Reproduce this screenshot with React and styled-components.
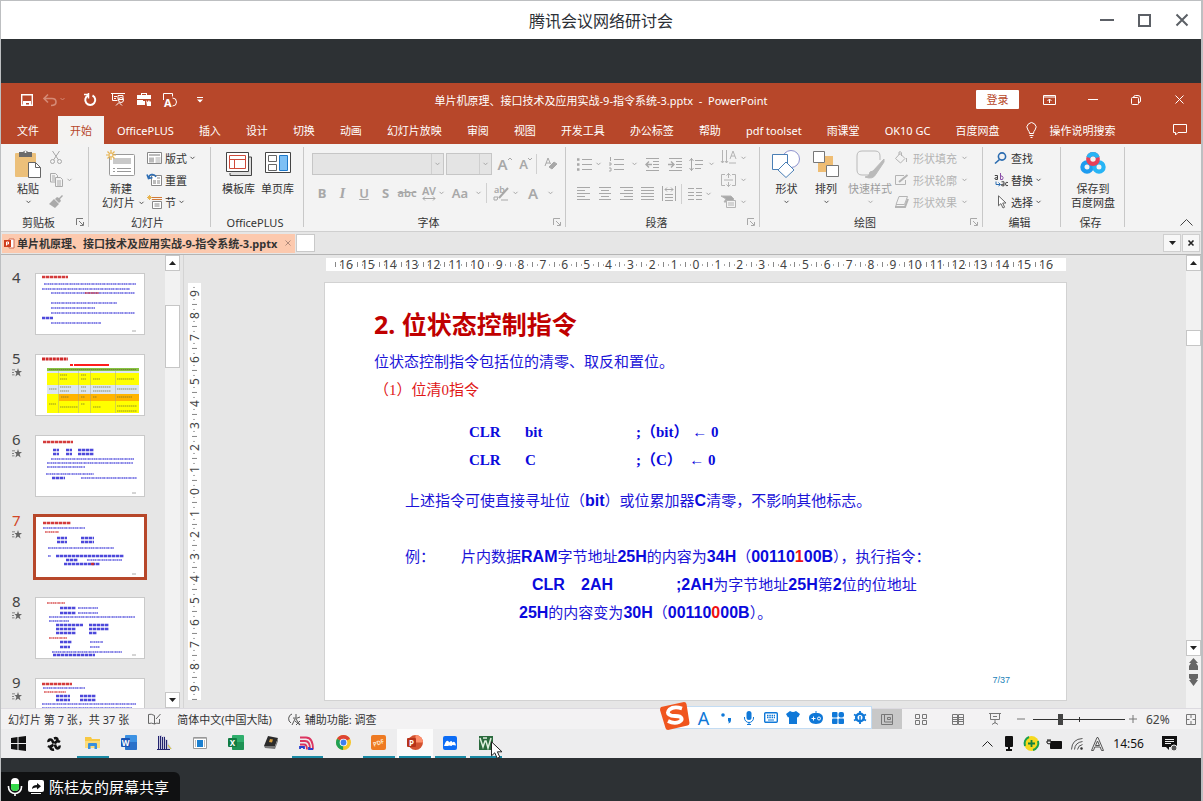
// App.jsx
import React from 'react';
import styled, { createGlobalStyle, css } from 'styled-components';

const ui = '"Noto Sans", "Noto Sans CJK SC", sans-serif';
const red = '#b7472a';
const gray = '#a8a8a8';

const GlobalStyle = createGlobalStyle`
  * {
    box-sizing: border-box;
  }

  body {
    margin: 0;
    background: #2d3134;
    font-family: ${ui};
    font-size: 11px;
    color: #333;
  }

  button, select, input {
    font: inherit;
    color: inherit;
    margin: 0;
    padding: 0;
    border: 0;
    background: none;
  }
`;

const Shell = styled.div`
  display: flex;
  flex-direction: column;
  height: 100vh;
  border: 1px solid #bdbfc1;
  border-right-width: 2px;
  border-bottom: 0;
  background: #2d3134;
`;

const Row = styled.div`
  display: flex;
  align-items: center;
`;

const Glyph = styled.svg`
  display: block;
  flex: none;
  overflow: visible;
`;

const Icon = ({ w = 16, h = w, children, ...rest }) => (
  <Glyph width={w} height={h} viewBox={`0 0 ${w} ${h}`} fill="none" stroke="currentColor" aria-hidden="true" {...rest}>
    {children}
  </Glyph>
);

const Chevron = ({ color = '#555' }) => (
  <Icon w={5} h={4} stroke={color}><path d="M.5 .8l2 2 2-2" /></Icon>
);

/* ---------- meeting window ---------- */

const MeetingBar = styled.header`
  display: grid;
  grid-template-columns: 1fr auto 1fr;
  align-items: center;
  flex: none;
  height: 38px;
  background: #fff;

  h1 {
    grid-column: 2;
    margin: 0;
    padding-top: 2px;
    font-size: 16px;
    font-weight: 400;
    line-height: 24px;
    color: #2b2f36;
  }
`;

const MeetingControls = styled(Row)`
  justify-content: flex-end;
  gap: 24px;
  padding-right: 13px;
  color: #5c6066;
`;

const Gap = styled.div`
  flex: none;
  height: 44px;
`;

const ShareStrip = styled.footer`
  display: flex;
  align-items: flex-end;
  flex: none;
  height: 43px;
`;

const ShareLabel = styled(Row)`
  height: 29px;
  padding: 0 11px 0 6px;
  gap: 5px;
  border-top-right-radius: 6px;
  background: #101112;
  color: #fff;
  font-size: 15px;
  line-height: 28px;
`;

/* ---------- title bar and tabs ---------- */

const TitleBar = styled.div`
  display: grid;
  grid-template-columns: 1fr auto 1fr;
  align-items: center;
  flex: none;
  height: 33px;
  background: ${red};
  color: #fff;
  white-space: pre;
`;

const QuickAccess = styled(Row)`
  padding-left: 19px;
`;

const WindowControls = styled(Row)`
  justify-content: flex-end;
`;

const Slot = styled.button`
  display: flex;
  align-items: center;
  justify-content: center;
  flex: none;
  width: ${p => p.$w || 16}px;
  height: ${p => p.$h || 20}px;
`;

const SignIn = styled.button`
  width: 43px;
  height: 19px;
  margin-right: 8px;
  border-radius: 1px;
  background: #fff;
  color: ${red};
  line-height: 19px;
`;

const Tabs = styled.nav`
  display: flex;
  align-items: stretch;
  gap: 1px;
  flex: none;
  height: 28px;
  background: ${red};
  color: #fff;
`;

const Tab = styled.button`
  flex: none;
  padding: ${p => (p.$file ? '0 18px 0 16px' : '0 12px')};
  white-space: nowrap;

  ${p => p.$active && css`
    background: #f4f3f2;
    color: ${red};
  `}
`;

const TellMe = styled.button`
  display: flex;
  align-items: center;
  gap: 12px;
  padding-left: 14px;
  margin-right: auto;
`;

/* ---------- ribbon ---------- */

const Ribbon = styled.div`
  display: flex;
  flex: none;
  height: 88px;
  padding-top: 3px;
  background: #f3f3f3;
  border-bottom: 1px solid #cfcfcf;
`;

const GroupBox = styled.section`
  display: flex;
  flex-direction: column;
  flex: none;
  width: ${p => p.$w}px;
  height: 80px;
  border-right: 1px solid #c8c8c8;
`;

const GroupBody = styled.div`
  display: flex;
  flex: 1;
  gap: ${p => p.$gap || 0}px;
  padding-left: ${p => p.$pad || 0}px;
`;

const GroupName = styled.div`
  display: flex;
  align-items: center;
  height: 14px;
  margin-bottom: -2px;
  padding-right: 4px;

  span {
    flex: 1;
    text-align: center;
  }
`;

const BigButton = styled.button`
  display: flex;
  flex-direction: column;
  align-items: center;
  flex: none;
  width: ${p => p.$w}px;
  padding-top: 3px;
  line-height: 14px;
  white-space: nowrap;
  opacity: ${p => (p.disabled ? 0.45 : 1)};

  & > svg:first-child {
    margin-bottom: 4px;
  }
`;

const Caret = styled.span`
  display: inline-flex;
  padding: 4px;
`;

const NameWithCaret = styled(Row)`
  gap: 4px;
  padding-left: 4px;
`;

const Stack = styled.div`
  display: flex;
  flex-direction: column;
  flex: none;
  gap: 1px;
`;

const SmallButton = styled.button`
  display: flex;
  align-items: center;
  gap: ${p => p.$gap || 3}px;
  height: 21px;
  white-space: nowrap;
  color: ${p => (p.disabled ? '#b4b4b4' : '#333')};
`;

const ToolRow = styled(Row)`
  height: ${p => p.$h || 29}px;
  color: ${gray};
`;

const Rule = styled.i`
  width: 1px;
  height: 20px;
  background: #d0d0d0;
`;

const Combo = styled.label`
  display: flex;
  width: ${p => p.$w}px;
  height: 22px;
  margin-right: 2px;
  border: 1px solid #c6c6c6;
  background: #e4e4e4;

  select {
    flex: 1;
    min-width: 0;
    appearance: none;
  }

  span {
    display: flex;
    align-items: center;
    width: 12px;
    padding-left: 3px;
    border-left: 1px solid #cfcfcf;
  }
`;

const Letter = styled.span`
  font-size: ${p => p.$size || 13}px;
  font-weight: ${p => p.$weight || 600};
  line-height: 18px;
  text-decoration: ${p => p.$line || 'none'};
  font-style: ${p => (p.$italic ? 'italic' : 'normal')};
  font-family: ${p => (p.$italic ? '"Liberation Serif", serif' : 'inherit')};
`;

const Collapse = styled.button`
  align-self: flex-end;
  margin: 0 8px 5px auto;
`;

/* ---------- document tabs ---------- */

const DocTabs = styled(Row)`
  flex: none;
  height: 23px;
  padding-right: 1px;
  background: #e6e6e6;
  border-bottom: 1px solid #b5b5b5;
`;

const DocTab = styled.div`
  display: flex;
  align-items: center;
  gap: 2px;
  height: 19px;
  margin-left: 1px;
  padding: 0 4px 0 2px;
  background: #fcc9ae;
  font-weight: 700;
  white-space: nowrap;

  button {
    margin-left: 6px;
  }
`;

const NewTab = styled.button`
  width: 19px;
  height: 18px;
  margin: 0 auto 0 1px;
  border: 1px solid #c9c9c9;
  background: #fff;
`;

const DocButton = styled.button`
  display: flex;
  align-items: center;
  justify-content: center;
  width: 18px;
  height: 18px;
  margin-left: 1px;
  border: 1px solid #cfcfcf;
  background: #f7f7f7;
`;

/* ---------- workspace ---------- */

const Workspace = styled.main`
  display: flex;
  flex: 1;
  min-height: 0;
  background: #e6e6e6;
`;

const Outline = styled.ol`
  display: flex;
  flex-direction: column;
  gap: 20px;
  flex: none;
  width: 164px;
  margin: 0;
  padding: 18px 0 0 11px;
  list-style: none;
  overflow: hidden;
`;

const OutlineItem = styled.li`
  display: flex;
  gap: 13px;
  flex: none;
  height: 61px;

  div {
    width: 10px;
    font-size: 15px;
    line-height: 8px;
    color: ${p => (p.$active ? '#d24726' : '#444')};
  }

  div svg {
    margin-top: 6px;
  }
`;

const Thumb = styled.svg`
  flex: none;
  width: 110px;
  height: 62px;
  background: #fff;
  outline: 1px solid #c9c9c9;
  outline-offset: -1px;

  ${p => p.$active && css`
    outline: 3px solid ${red};
    outline-offset: -1px;
  `}
`;

const Scrollbar = styled.div`
  display: flex;
  flex-direction: column;
  flex: none;
  width: 15px;
  padding-bottom: ${p => p.$bottom || 0}px;
  background: #f2f2f2;
`;

const ScrollButton = styled.button`
  display: flex;
  align-items: center;
  justify-content: center;
  flex: none;
  width: 15px;
  height: 16px;
  border: 1px solid #c6c6c6;
  background: #fff;
`;

const ScrollThumb = styled.div`
  height: ${p => p.$h}px;
  margin: ${p => p.$top}px 0 auto;
  border: 1px solid #c6c6c6;
  background: #fff;
`;

const Canvas = styled.div`
  display: grid;
  grid-template-columns: 13px 1fr;
  grid-template-rows: 13px auto;
  gap: 12px 124px;
  align-content: start;
  flex: 1;
  min-width: 0;
  margin-left: 3px;
  padding: 3px 120px 0 4px;
  border-left: 1px solid #d4d4d4;
`;

const RulerH = styled.div`
  display: flex;
  grid-column: 2;
  padding: 0 9px;
  margin-left: 1px;
  background: #fff;
`;

const Mark = styled.span`
  flex: 1 1 0;
  min-width: 0;
  display: flex;
  justify-content: center;
  align-items: center;
  font-size: 12px;
  line-height: 13px;
  color: #444;
  background:
    linear-gradient(#888, #888) left center / 1px 5px no-repeat,
    linear-gradient(#aaa, #aaa) 5px center / 1px 2px no-repeat,
    linear-gradient(#aaa, #aaa) 17px center / 1px 2px no-repeat;
`;

const RulerV = styled.div`
  display: flex;
  flex-direction: column;
  background: #fff;

  ${Mark} {
    writing-mode: vertical-rl;
    transform: rotate(180deg);
    background:
      linear-gradient(#888, #888) center top / 5px 1px no-repeat,
      linear-gradient(#aaa, #aaa) center 5px / 2px 1px no-repeat,
      linear-gradient(#aaa, #aaa) center 17px / 2px 1px no-repeat;
  }
`;

const Slide = styled.article`
  display: flex;
  flex-direction: column;
  aspect-ratio: 741 / 417;
  padding: 26px 56px 14px 49px;
  background: #fff;
  box-shadow: 0 0 0 1px #d2d2d2;
  color: #1c14d8;
  font-family: "Liberation Sans", "Noto Sans CJK SC", sans-serif;
  font-size: 15px;
  line-height: 28px;
  white-space: nowrap;

  h2 {
    margin: 0 0 9px;
    color: #c00000;
    font-family: ${ui};
    font-size: 25px;
    line-height: 30px;
  }

  p {
    margin: 0;
  }

  b {
    font-size: 16px;
    color: #0a0adc;
  }

  em {
    font-style: normal;
    color: #f01010;
  }
`;

const Serif = styled.div`
  font-family: "Liberation Serif", "Noto Sans CJK SC", serif;

  & > p:last-child {
    color: #e01818;
  }
`;

const Code = styled.div`
  display: grid;
  grid-template-columns: 56px 111px auto;
  justify-content: start;
  margin: 14px 0 13px 95px;
  font-family: "Liberation Serif", "Noto Sans CJK SC", serif;
  font-size: 15px;
  font-weight: 700;
  color: #0a0adc;
  white-space: pre;
`;

const Indent = styled.div`
  padding-left: 31px;
`;

const Example = styled.div`
  display: grid;
  grid-template-columns: 56px auto;
  margin-top: 28px;
`;

const Step = styled.p`
  display: flex;
  grid-column: 2;
  padding-left: 71px;

  span:nth-child(1) {
    width: 49px;
  }

  span:nth-child(2) {
    width: 95px;
  }
`;

const Result = styled.p`
  grid-column: 2;
  padding-left: 58px;
`;

const PageNo = styled.div`
  margin-top: auto;
  align-self: flex-end;
  color: #1a7fb8;
  font-size: 9px;
  line-height: 12px;
`;

/* ---------- status bar ---------- */

const StatusBar = styled(Row)`
  position: relative;
  flex: none;
  height: 21px;
  padding: 0 5px 0 7px;
  border-top: 1px solid #dcdae0;
  background: #f3f2f3;
  white-space: pre;
`;

const StatusItem = styled(Row)`
  gap: 3px;
  margin-right: ${p => p.$mr || 0}px;
`;

const Views = styled(Row)`
  margin-left: auto;
  color: #777;
`;

const ViewButton = styled(Slot)`
  background: ${p => (p.$active ? '#c8c8c8' : 'none')};
`;

const Zoom = styled.input`
  appearance: none;
  width: 92px;
  height: 12px;
  margin: 0 4px;
  background:
    linear-gradient(#333, #333) 50% 50% / 1px 5px no-repeat,
    linear-gradient(#333, #333) 0 50% / 100% 1px no-repeat;

  &::-webkit-slider-thumb {
    appearance: none;
    width: 5px;
    height: 11px;
    background: #444;
  }
`;

const Percent = styled.output`
  width: 39px;
  margin-left: 9px;
  font-size: 12px;
  color: #444;
`;

// Input-method toolbar floating over the status bar.
const Ime = styled.div`
  position: absolute;
  right: 329px;
  bottom: 0;
  display: flex;
  align-items: center;
  height: 23px;
  padding-left: 21px;
  border: 1px solid #c3dcf3;
  background: #fff;
  color: #0f78d8;

  & > svg {
    position: absolute;
    left: -12px;
    top: -5px;
  }
`;

/* ---------- taskbar ---------- */

const Taskbar = styled(Row)`
  flex: none;
  height: 29px;
  background: #ededee;
  color: #111;
`;

const Apps = styled.div`
  display: flex;
  align-self: stretch;
  width: 429px;
  margin-left: 2px;
`;

const TaskButton = styled.button`
  position: relative;
  display: flex;
  flex: 1;
  align-items: center;
  justify-content: center;
  border-bottom: 2px solid transparent;
  background: ${p => (p.$active ? '#fbfbfb' : 'none')};

  ${p => p.$open && css`
    border-image: linear-gradient(90deg, transparent 10%, #1a8aa5 10%, #1a8aa5 90%, transparent 90%) 2;
  `}
`;

const Cursor = styled.span`
  position: absolute;
  left: 23px;
  top: 12px;
`;

const Tray = styled(Row)`
  margin-left: auto;
  padding-right: 23px;

  time {
    margin: 0 17px 0 7px;
    font-size: 12px;
  }
`;

/* ---------- drawings ---------- */

const Launcher = ({ color = '#777' }) => (
  <Icon w={8} stroke={color}><path d="M.5 7V.5H7M3 3l4 4M7.5 4v3.5H4" /></Icon>
);

const Up = () => <Icon w={7} h={4} fill="#222" stroke="none"><path d="M0 4L3.500 0 7 4z" /></Icon>;
const Down = () => <Icon w={7} h={4} fill="#222" stroke="none"><path d="M0 0h7L3.500 4z" /></Icon>;
const Cross = ({ w = 9, ...rest }) => <Icon w={w} {...rest}><path d={`M.5 .5L${w - 0.5} ${w - 0.5}M${w - 0.5} .5L.5 ${w - 0.5}`} /></Icon>;

const Star = () => (
  <Icon w={10} h={9} stroke="none" fill="#666">
    <path d="M6 0l1 3h3L7.600 5l1 3.500L6 6.500 3.400 8.500l1-3.500L2.500 3H5z" />
    <path d="M0 1.500h3v.8H0zM0 4h2v.8H0zM0 6.500h2.500v.8H0z" />
  </Icon>
);

const lines = (list, w = 14, h = 14) => (
  <Icon w={w} h={h}>{list.map(([x1, x2], i) => <path key={i} d={`M${x1} ${i * 3 + 1.5}H${x2}`} />)}</Icon>
);

const Paste = () => (
  <Icon w={26} h={28} stroke="none">
    <rect y="3" width="21" height="24" rx="1" fill="#ecc07a" />
    <path d="M4 2h4a3 3 0 015 0h4v5H4z" fill="#6b6b6b" />
    <circle cx="10.500" cy="2" r="1" fill="#fff" />
    <path d="M13.500 12.500h7l5 5v10h-12z" fill="#fff" stroke="#666" />
    <path d="M20.500 12.500v5h5" stroke="#666" />
  </Icon>
);
const Cut = () => (
  <Icon w={12} h={13} stroke={gray}><path d="M2.500 0l6 9M9.500 0l-6 9" /><circle cx="2.500" cy="10.500" r="2" /><circle cx="9.500" cy="10.500" r="2" /></Icon>
);
const Copy = () => (
  <Icon w={13} h={14} stroke="#aaa"><path d="M.5.5h5l2 2V9h-7zM2 3h3M2 5h3M2 7h3" /><path d="M5.500 4.500h5l2 2v7h-7z" fill="#f3f3f3" /><path d="M7 8h4M7 10h4M7 12h4" /></Icon>
);
const Painter = () => (
  <Icon w={14} h={13} stroke="none" fill="#aaa"><path d="M10 3l3-3 1 1-3 3 1 2-2 2-4-4 2-2zM5 4l5 5-4 4-6-4z" /></Icon>
);
const NewSlide = () => (
  <Icon w={30} h={28}>
    <rect x="3.500" y="4.500" width="25" height="21" rx="1" fill="#fff" stroke="#999" />
    <path d="M7 8h18v6H7z" fill="#c9c9c9" stroke="none" />
    <path d="M7 18.500h2m2 0h14M7 21.500h2m2 0h14" stroke="#999" />
    <path d="M5 0v10M0 5h10M1.500 1.500l7 7M8.500 1.500l-7 7" stroke="#e8b450" strokeWidth="1.200" />
    <circle cx="5" cy="5" r="2" fill="#f3f3f3" stroke="#e8b450" />
  </Icon>
);
const Layout = () => (
  <Icon w={15} h={12} stroke="#888"><path d="M.5.5h14v11H.5z" fill="#fff" /><path d="M2 2h11v2H2zM2 5.500h5v5H2z" fill="#bbb" stroke="none" /><path d="M8.500 6h5M8.500 8h5M8.500 10h5" stroke="#aaa" /></Icon>
);
const Reset = () => (
  <Icon w={15} h={13} stroke="#888"><path d="M4.500 2.500h10v10h-10z" fill="#fff" /><path d="M6 7h3v4H6z" fill="#bbb" stroke="none" /><path d="M10 5h3M10 8h3M10 10h3" /><path d="M1.500 5.500C2 1 7 0 9 4M0 1.500l1.500 4 4-1" stroke="#2f6fb5" strokeWidth="1.600" /></Icon>
);
const Section = () => (
  <Icon w={15} h={14} stroke="#888"><path d="M5.500 6.500h9v7h-9z" fill="#fff" /><path d="M7.500 9h5M7.500 11h5" /><path d="M5 2.500h10M5 4.500h10" stroke="#d07a3a" /><path d="M2.500 0v5M0 2.500h5M.8.8l3.400 3.400M4.200.8L.8 4.200" stroke="#e8b450" /></Icon>
);
const Templates = () => (
  <Icon w={26} h={28} stroke="#444"><path d="M4 23v2.500h21.500V7H23" fill="#ddd" /><path d="M.5 2.500h22v19H.5z" fill="#fff" /><path d="M3.500 5.500h16v13h-16zM3.500 9.500h16M8.500 9.500v9" stroke="#cf4a3a" /></Icon>
);
const Pages = () => (
  <Icon w={26} h={28} stroke="#444"><path d="M.5 2.500h25v20H.5z" fill="#fff" /><path d="M3.500 5.500h8v6h-8zM3.500 14.500h8v6h-8z" fill="#fff" stroke="#666" /><path d="M14.500 5.500h8v15h-8z" fill="#7ec0f5" stroke="#1f78c8" /></Icon>
);
const Shapes = () => (
  <Icon w={29} h={28}><circle cx="19" cy="9" r="8.500" fill="#fff" stroke="#8f93cf" /><path d="M.5 4.500h15v15H.5z" fill="#fff" stroke="#4a7fb5" /><path d="M14 12l8 8-8 7.500-8-7.500z" fill="#fff" stroke="#4a7fb5" /></Icon>
);
const Arrange = () => (
  <Icon w={26} h={28}><path d="M5 13h8v9H5zM12 6h8v9h-8z" fill="#efbd73" stroke="none" /><path d="M.5 1.500h11v11H.5zM13.500 15.500h12v11h-12z" fill="#fff" stroke="#777" /></Icon>
);
const QuickStyle = () => (
  <Icon w={29} h={28} stroke="#777"><path d="M14 25H6q-5 0-5-5V6q0-5 5-5h13q5 0 5 5v4" /><path d="M28 9L17 21l3 3 8-12zM17 21q-4 0-4 4-2 2-4 2 8 3 11-3z" fill="#777" /></Icon>
);
const Cloud = () => (
  <Icon w={26} h={28} strokeWidth="4.200">
    <circle cx="7" cy="17" r="4.600" stroke="#1e9cf0" /><circle cx="19" cy="17" r="4.600" stroke="#27b4f5" /><circle cx="13" cy="9" r="4.800" stroke="#e8405a" /><path d="M8.400 7.500a4.800 4.800 0 019.200 0" stroke="#27b4f5" />
  </Icon>
);
const Bucket = () => <Icon w={13} h={13}><path d="M5 2.500l5 5-4.500 4.500-5-4.500zM4 4V1q2-1 2.500 1v3M11.500 7v4" /></Icon>;
const PenBox = () => <Icon w={13} h={12}><path d="M9 1.500H.5v9h10V6" /><path d="M4 8l8.500-7" strokeWidth="2" /></Icon>;
const Effect = () => <Icon w={13} h={12}><path d="M4 .5h8.500l-3 8H1z" /><path d="M1 9.500v1.500h9l3-8" strokeWidth="2" /></Icon>;
const Search = () => <Icon w={14} h={12} stroke="#2b6cb0" strokeWidth="1.600"><circle cx="8" cy="4.500" r="3.600" /><path d="M5.500 7.500L1 11.500" /></Icon>;
const Replace = () => (
  <Icon w={14} h={14}>
    <g fill="none" stroke="#444"><path d="M.8 2.500h2.700v4H1.500Q.5 6 1 5l2.500-.5M7.500 8.800H10v4H8Q7 12.500 7.500 11.500L10 11M14 9.500q-2.500-1-2.500 1.500t2.500 1.500" /></g>
    <path d="M6.500 0v6.500h2q1.500-2-.5-3.500H6.500" stroke="#8a4fa8" />
    <path d="M2 8.500v3h4M4.500 9.500l2 2-2 1.500" stroke="#2b6cb0" />
  </Icon>
);
const Pointer = () => <Icon w={14} h={14} stroke="#666"><path d="M4.500 .8v10l2.400-2.200L9 13l1.600-.8L8.700 8H12z" fill="#fff" /></Icon>;
const Bulb = () => <Icon w={11} h={16}><path d="M3.500 11.500Q3.500 9.500 2 8a4.500 4.500 0 117 0q-1.500 1.500-1.500 3.500zM3.500 13.500h4M4.500 15.500h2" /></Icon>;
const Mic = ({ w = 12 }) => <Icon w={w} h={14} stroke="none" fill="currentColor"><rect x={w / 2 - 2.5} width="5" height="9" rx="2.500" /><path d={`M${w / 2 - 4.5} 6v1a4.500 4.500 0 009 0V6`} fill="none" stroke="currentColor" /><path d={`M${w / 2} 11v2.500m-2 0h4`} stroke="currentColor" /></Icon>;

const Office = ({ letter, dark, light }) => (
  <Icon w={16} h={15} stroke="none"><rect x="4" y="0" width="12" height="15" rx="1" fill={light} /><path d="M4 7h12v7q0 1-1 1H5q-1 0-1-1z" fill={dark} opacity=".55" /><rect y="3" width="9" height="9" rx="1" fill={dark} /><text x="4.500" y="10.500" fontSize="8" fontWeight="700" textAnchor="middle" fill="#fff">{letter}</text></Icon>
);

const apps = [
  { name: '文件资源管理器', open: true, icon: <Icon w={15} h={13} stroke="none"><path d="M0 1h6l1 2h8v9H0z" fill="#f7c843" /><path d="M0 5h15v7H0z" fill="#fddc7a" /><path d="M3 13V8q0-1 1-1h7q1 0 1 1v5h-2.500v-3h-4v3z" fill="#3a8fdd" /></Icon> },
  { name: 'Word', icon: <Office letter="W" dark="#1b55b5" light="#3d92e3" /> },
  { name: '数据', icon: <Icon w={15} h={15} stroke="none"><path d="M1 1l4-1v2l3-1v3l3 1v3l4 6H1z" fill="#c6c6dc" /><path d="M1.500 1v14M3.500 1v14M5.500 2v13M7.500 2v13M9.500 5v10M0 14.500h13" stroke="#22236e" /><path d="M11 10l3 4" stroke="#e0cf30" /></Icon> },
  { name: '窗口', icon: <Icon w={14} h={12} stroke="#999"><path d="M.5.500h13v11H.5z" fill="#fff" /><path d="M4 3h6v7H4z" fill="#1a7fd0" stroke="none" /><path d="M2.500 3v7M11.500 3v7M1 1.500h12" stroke="#bbb" /></Icon> },
  { name: 'Excel', icon: <Office letter="X" dark="#107c41" light="#2fae6c" /> },
  { name: '芯片', icon: <Icon w={15} h={13} stroke="none"><path d="M4 0l10 2-3 8-11 0z" fill="#2b2b2b" /><path d="M0 10h11v3L1 12zM11 10l3-8v3l-3 8z" fill="#777" /><path d="M6 3l3 .5-1 3-3-.5z" fill="#d8a040" /></Icon> },
  { name: '信号', open: true, icon: <Icon w={14} h={14} strokeWidth="1.800"><path d="M0 1.500h6q7 0 7 12M0 5h5q5 0 5 8M0 8.500h4q3 0 3 5" stroke="#dc3560" /><path d="M0 13V11h4v2M9 11v2h4" stroke="#2a3fd0" /></Icon> },
  { name: 'Chrome', icon: <Icon w={15} stroke="none"><circle cx="7.500" cy="7.500" r="7.500" fill="#f5c52a" /><path d="M7.500 7.500L1 3.800A7.500 7.500 0 0114 3.800z" fill="#dd4434" /><path d="M7.500 7.500L1 3.800A7.500 7.500 0 007 15z" fill="#1fa055" /><circle cx="7.500" cy="7.500" r="3.800" fill="#fff" /><circle cx="7.500" cy="7.500" r="2.900" fill="#3f7ff0" /></Icon> },
  { name: 'PDF', open: true, icon: <Icon w={15} stroke="none"><rect width="15" height="15" rx="2" fill="#ee7a22" /><text x="7.500" y="10" fontSize="6" fontWeight="700" textAnchor="middle" fill="#ffe6c8" transform="rotate(-20 7.500 7.500)">PDF</text></Icon> },
  { name: 'PowerPoint', open: true, active: true, icon: <Icon w={16} h={15} stroke="none"><circle cx="8.500" cy="7.500" r="7.500" fill="#d35230" /><path d="M8.500 0A7.500 7.500 0 0116 7.500H8.500z" fill="#ff8f6b" /><rect y="3" width="9" height="9" rx="1" fill="#b7331a" /><text x="4.500" y="10.500" fontSize="8" fontWeight="700" textAnchor="middle" fill="#fff">P</text></Icon> },
  { name: '腾讯会议', open: true, icon: <Icon w={14} stroke="none"><rect width="14" height="14" rx="2" fill="#0c6cf5" /><path d="M1 10q2-6 4-5 1 0 1 1.500Q8 4 9 5.500l.3 1Q12 4 13 9.500L9.500 9 8.500 10 6 9.500 5 10z" fill="#fff" /></Icon> },
  { name: 'Keil', open: true, cursor: true, icon: <Icon w={14} stroke="none"><rect width="14" height="14" fill="#2b6a3d" /><path d="M1 2l3 9 2-6h1l2 7 3-10M4 2h4" fill="none" stroke="#dff0df" strokeWidth="1.500" /></Icon> },
];

/* Each miniature: [y, x, width, colour, heavy] per text line. */
const B = '#3a36d8';
const R = '#d02828';
const minis = {
  4: [[4, 7, 26, R, 1], [11, 9, 92, B], [16, 7, 88, B], [20, 16, 84, B], [20, 50, 14, R], [30, 16, 66, B], [35, 16, 44, B], [40, 16, 84, B], [45, 7, 11, B, 1], [50, 16, 50, B]],
  6: [[7, 8, 30, R, 1], [15, 18, 6, B, 1], [15, 31, 6, B, 1], [15, 43, 16, B, 1], [19, 18, 6, B, 1], [19, 31, 6, B, 1], [19, 43, 16, B, 1], [24, 16, 83, B], [28, 12, 86, B], [32, 12, 38, B], [39, 11, 48, B], [43, 17, 13, B, 1], [43, 46, 56, B]],
  7: [[7, 8, 28, R, 1], [12, 8, 42, B], [16, 10, 14, R], [22, 22, 10, B, 1], [22, 46, 13, B, 1], [26, 22, 10, B, 1], [26, 46, 13, B, 1], [32, 13, 66, B], [40, 13, 3, B], [40, 21, 68, B, 1], [44, 31, 12, B, 1], [44, 52, 35, B], [48, 29, 36, B, 1], [48, 56, 3, R, 1]],
  8: [[6, 12, 18, R], [11, 25, 16, B, 1], [11, 43, 20, B], [16, 25, 16, B, 1], [16, 43, 20, B], [20, 14, 86, B], [24, 14, 20, B], [28, 21, 27, B, 1], [28, 54, 20, B, 1], [32, 21, 20, B, 1], [32, 54, 20, B, 1], [36, 21, 20, B, 1], [36, 54, 8, B, 1], [41, 14, 18, R], [45, 25, 12, B, 1], [45, 55, 13, B], [50, 25, 10, B, 1], [50, 55, 10, B], [55, 17, 70, B], [58, 18, 42, B, 1]],
  9: [[6, 7, 30, R, 1], [10, 8, 42, B], [14, 9, 22, R], [18, 21, 14, B, 1], [18, 45, 16, B, 1], [22, 21, 14, B, 1], [22, 45, 16, B, 1], [26, 7, 94, B], [30, 7, 90, B]],
};

const Mini = ({ n, active }) => (
  <Thumb viewBox="0 0 110 62" $active={active} role="img" aria-label={`幻灯片 ${n}`}>
    {n === 5 ? (
      <g>
        <path d="M7 5h26" stroke={R} strokeWidth="3" strokeDasharray="3 .6" />
        <path d="M35 11h3m1 0h35" stroke="#ff1d1d" strokeWidth="2" />
        <path d="M12 14h92v3H12z" fill="#86c440" />
        <path d="M12 17h92v2H12zM12 31h92v9H12z" fill="#dce6f2" />
        <path d="M12 19h92v12H12zM12 40h92v19H12z" fill="#ff0" />
        <path d="M24 40h80v7H24z" fill="#ffb400" />
        <path d="M23.500 15v44M43.500 15v44M55.500 15v44M80.500 15v44" stroke="#999" strokeWidth=".4" />
        <path d="M14 15.500h87M25 21h7M25 25h7M46 21h5M46 25h5M58 25h7M82 25h17M25 33h11M46 33h5M58 33h18M14 35h8M82 35h20M25 37h9M46 37h5M58 37h18M26 43h8M46 43h4M58 43h4M82 43h15M14 50h7M46 50h4M25 53h18M58 53h8M82 52h20M82 57h20" stroke="#6b6b30" strokeWidth="1.200" strokeDasharray="1.500 .5" opacity=".7" />
      </g>
    ) : (
      minis[n].map(([y, x, w, c, heavy], i) => (
        <path key={i} d={`M${x} ${y}h${w}`} stroke={c} strokeWidth={heavy ? 2.4 : 2} strokeDasharray={heavy ? '3.4 .6' : '1.8 .5 1 .4'} opacity={heavy ? 0.9 : 0.6} />
      ))
    )}
    {n !== 9 && n !== 5 && <path d="M97 58h4" stroke="#aaa" />}
  </Thumb>
);

/* ---------- pieces ---------- */

const Group = ({ w, name, pad, gap, launcher, children }) => (
  <GroupBox $w={w} aria-label={name}>
    <GroupBody $pad={pad} $gap={gap}>{children}</GroupBody>
    <GroupName><span>{name}</span>{launcher && <Launcher color={launcher} />}</GroupName>
  </GroupBox>
);

const tabs = ['OfficePLUS', '插入', '设计', '切换', '动画', '幻灯片放映', '审阅', '视图', '开发工具', '办公标签', '帮助', 'pdf toolset', '雨课堂', 'OK10 GC', '百度网盘'];

const range = n => Array.from({ length: n * 2 + 1 }, (_, i) => Math.abs(i - n));

function PowerPointRibbon() {
  return (
    <Ribbon>
      <Group w={88} name="剪贴板" launcher="#777" pad={10}>
        <BigButton $w={34}><Paste />粘贴<Caret><Chevron /></Caret></BigButton>
        <Stack>
          <Slot $w={22} $h={21} aria-label="剪切"><Cut /></Slot>
          <Row><Slot $w={22} $h={21} aria-label="复制"><Copy /></Slot><Chevron color={gray} /></Row>
          <Slot $w={22} $h={21} aria-label="格式刷"><Painter /></Slot>
        </Stack>
      </Group>
      <Group w={122} name="幻灯片" pad={8} gap={2}>
        <BigButton $w={48}><NewSlide />新建<NameWithCaret as="span">幻灯片<Chevron /></NameWithCaret></BigButton>
        <Stack>
          <SmallButton><Layout />版式 <Chevron /></SmallButton>
          <SmallButton><Reset />重置</SmallButton>
          <SmallButton><Section />节 <Chevron /></SmallButton>
        </Stack>
      </Group>
      <Group w={93} name="OfficePLUS" pad={8}>
        <BigButton $w={39}><Templates />模板库</BigButton>
        <BigButton $w={39}><Pages />单页库</BigButton>
      </Group>
      <Group w={262} name="字体" launcher={gray} pad={8}>
        <Stack>
          <ToolRow $h={34}>
            <Combo $w={132}><select aria-label="字体" disabled /><span><Chevron color={gray} /></span></Combo>
            <Combo $w={46}><select aria-label="字号" disabled /><span><Chevron color={gray} /></span></Combo>
            <Slot $w={21} aria-label="增大字号"><Letter $size={15}>A</Letter><Icon w={4} h={12}><path d="M0 2l2-2 2 2" /></Icon></Slot>
            <Slot $w={21} aria-label="减小字号"><Letter $size={13}>A</Letter><Icon w={4} h={12}><path d="M0 0l2 2 2-2" /></Icon></Slot>
            <Rule />
            <Slot $w={28} aria-label="清除格式"><Icon w={14} h={14}><path d="M1 9L4 1l2.500 6M2 6h4" /><path d="M5 10l5-5 3 2-5 5z" fill={gray} /></Icon></Slot>
          </ToolRow>
          <ToolRow $h={22}>
            <Slot $w={20}><Letter $weight={700}>B</Letter></Slot>
            <Slot $w={21}><Letter $italic $size={15}>I</Letter></Slot>
            <Slot $w={22}><Letter $line="underline">U</Letter></Slot>
            <Slot $w={21}><Letter $weight={700}>S</Letter></Slot>
            <Slot $w={22}><Letter $size={11} $line="line-through">abc</Letter></Slot>
            <Slot $w={21} aria-label="字符间距"><Icon w={14} h={15} fontSize="11"><text x="0" y="9" fill={gray} stroke="none" fontWeight="600">AV</text><path d="M1 12.500h12M3 10.500l-2 2 2 2M11 10.500l2 2-2 2" /></Icon></Slot>
            <Chevron color={gray} />
            <Slot $w={32}><Letter $size={13}>Aa</Letter></Slot>
            <Chevron color={gray} />
            <Slot $w={10} as="span"><Rule /></Slot>
            <Slot $w={22} aria-label="突出显示"><Icon w={16} h={15}><text x="0" y="7" fontSize="9" fill={gray} stroke="none" fontWeight="600">ab</text><path d="M5 12l9-10" strokeWidth="2" /><path d="M0 11h4l-1 3H0zM7 14h7" /></Icon></Slot>
            <Chevron color={gray} />
            <Slot $w={30} aria-label="字体颜色"><Letter $size={15}>A</Letter></Slot>
            <Chevron color={gray} />
          </ToolRow>
        </Stack>
      </Group>
      <Group w={194} name="段落" launcher={gray} pad={7} gap={7}>
        <Stack>
          <ToolRow $h={34}>
            <Slot $w={23} aria-label="项目符号"><Icon w={15} h={14}><path d="M5 2.500h10M5 7.500h10M5 12.500h10" /><path d="M0 2.500h2.500M0 7.500h2.500M0 12.500h2.500" strokeWidth="2.500" /></Icon></Slot>
            <Chevron color={gray} />
            <Slot $w={31} aria-label="编号"><Icon w={15} h={14}><path d="M5 2.500h10M5 7.500h10M5 12.500h10M1.500 0v4M0 6h2v2H0M0 11h2v3H0" /></Icon></Slot>
            <Chevron color={gray} />
            <Slot $w={30} aria-label="减少缩进"><Icon w={14} h={13}><path d="M1 .5h13M8 3.500h6M8 6.500h6M8 9.500h6M1 12.500h13" /><path d="M7 6.500H1M4 3.500l-3 3 3 3" strokeWidth="1.400" /></Icon></Slot>
            <Slot $w={15} aria-label="增加缩进"><Icon w={14} h={13}><path d="M1 .5h13M8 3.500h6M8 6.500h6M8 9.500h6M1 12.500h13" /><path d="M0 6.500h6M3 3.500l3 3-3 3" strokeWidth="1.400" /></Icon></Slot>
            <Slot $w={27} aria-label="行距"><Icon w={14} h={13}><path d="M6 2.500h8M6 6.500h8M6 10.500h6M2.500 0v13M.5 3l2-2.500 2 2.500M.5 10l2 2.500 2-2.500" /></Icon></Slot>
            <Chevron color={gray} />
          </ToolRow>
          <ToolRow $h={23}>
            <Slot $w={21} aria-label="左对齐">{lines([[0, 13], [0, 8], [0, 13], [0, 8], [0, 13]], 14, 15)}</Slot>
            <Slot $w={21} aria-label="居中">{lines([[1, 13], [3, 11], [1, 13], [3, 11], [1, 13]], 14, 15)}</Slot>
            <Slot $w={22} aria-label="右对齐">{lines([[1, 14], [5, 14], [1, 14], [5, 14], [1, 14]], 14, 15)}</Slot>
            <Slot $w={21} aria-label="两端对齐">{lines([[0, 13], [0, 13], [0, 13], [0, 13], [0, 13]], 14, 15)}</Slot>
            <Slot $w={21} aria-label="分散对齐"><Icon w={14} h={15}><path d="M.5 0v15M13.500 0v15M3 3.500h8M3 8.500h8M3 11.500h8M3 14.500h8M5 1.500l-2 2 2 2M9 1.500l2 2-2 2" /></Icon></Slot>
            <Slot $w={5} as="span"><Rule /></Slot>
            <Slot $w={22} aria-label="分栏"><Icon w={14} h={13}><path d="M0 1.500h6M8 1.500h6M0 5.500h6M8 5.500h6M0 8.500h6M8 8.500h6M0 12.500h6M8 12.500h6" /></Icon></Slot>
            <Chevron color={gray} />
          </ToolRow>
        </Stack>
        <Stack>
          <SmallButton disabled $gap={5} aria-label="文字方向"><Icon w={15} h={15}><path d="M1.500 0v13M5.500 0v13M0 11l1.500 2L3 11M4 11l1.500 2L7 11M9 9l3-8 3 8M10 6h4M8 13h7" /></Icon><Chevron color={gray} /></SmallButton>
          <SmallButton disabled $gap={5} aria-label="对齐文本"><Icon w={15} h={14}><path d="M4 1.500H.5v11H4M11 1.500h3.500v11H11M3 7h9M7.500 0v5M7.500 9v5M5.500 2.500l2-2 2 2M5.500 11.500l2 2 2-2" /></Icon><Chevron color={gray} /></SmallButton>
          <SmallButton disabled $gap={5} aria-label="转换为 SmartArt"><Icon w={15} h={13}><path d="M0 1h10l3 3-3 3H3L5 4z" fill={gray} /><path d="M5.500 5.500h9v7h-9z" fill="#f3f3f3" /><path d="M7 8h6M7 10h6" /></Icon><Chevron color={gray} /></SmallButton>
        </Stack>
      </Group>
      <Group w={223} name="绘图" launcher={gray} pad={7} gap={1}>
        <BigButton $w={39}><Shapes />形状<Caret><Chevron /></Caret></BigButton>
        <BigButton $w={38}><Arrange />排列<Caret><Chevron /></Caret></BigButton>
        <BigButton $w={48} disabled><QuickStyle />快速样式<Caret><Chevron /></Caret></BigButton>
        <Stack>
          <SmallButton disabled $gap={5}><Bucket />形状填充 <Chevron color={gray} /></SmallButton>
          <SmallButton disabled $gap={5}><PenBox />形状轮廓 <Chevron color={gray} /></SmallButton>
          <SmallButton disabled $gap={5}><Effect />形状效果 <Chevron color={gray} /></SmallButton>
        </Stack>
      </Group>
      <Group w={78} name="编辑" pad={11}>
        <Stack>
          <SmallButton><Search />查找</SmallButton>
          <SmallButton><Replace />替换 <Chevron /></SmallButton>
          <SmallButton><Pointer />选择 <Chevron /></SmallButton>
        </Stack>
      </Group>
      <Group w={64} name="保存" pad={6}>
        <BigButton $w={52}><Cloud />保存到<span>百度网盘</span></BigButton>
      </Group>
      <Collapse aria-label="折叠功能区"><Icon w={13} h={7} stroke="#444"><path d="M.5 6.500l6-6 6 6" /></Icon></Collapse>
    </Ribbon>
  );
}

function SlideCanvas() {
  return (
    <Canvas>
      <RulerH>{range(16).map((n, i) => <Mark key={i}>{n}</Mark>)}</RulerH>
      <RulerV>{range(9).map((n, i) => <Mark key={i}>{n}</Mark>)}</RulerV>
      <Slide>
        <h2>2. 位状态控制指令</h2>
        <Serif>
          <p>位状态控制指令包括位的清零、取反和置位。</p>
          <p>（1）位清0指令</p>
        </Serif>
        <Code>
          <span>CLR</span><span>bit</span><span>;（bit） ← 0</span>
          <span>CLR</span><span>C</span><span>;（C）  ← 0</span>
        </Code>
        <Indent>
          <p>上述指令可使直接寻址位（<b>bit</b>）或位累加器<b>C</b>清零，不影响其他标志。</p>
          <Example>
            <p>例：</p>
            <p>片内数据<b>RAM</b>字节地址<b>25H</b>的内容为<b>34H</b>（<b>00110<em>1</em>00B</b>），执行指令：</p>
            <Step><span><b>CLR</b></span><span><b>2AH</b></span><span><b>;2AH</b>为字节地址<b>25H</b>第<b>2</b>位的位地址</span></Step>
            <Result><b>25H</b>的内容变为<b>30H</b>（<b>00110<em>0</em>00B</b>）。</Result>
          </Example>
        </Indent>
        <PageNo>7/37</PageNo>
      </Slide>
    </Canvas>
  );
}

function Status() {
  return (
    <StatusBar>
      <StatusItem $mr={19}>幻灯片 第 7 张，共 37 张</StatusItem>
      <StatusItem $mr={16}><Icon w={13} h={12} stroke="#666"><path d="M6.500 2.500Q3 .5.500 1.500v9q3-1 6 .5 2-1.500 5-.5V6M6.500 2.500V11M8 6l4.500-5" /></Icon></StatusItem>
      <StatusItem $mr={16}>简体中文(中国大陆)</StatusItem>
      <StatusItem><Icon w={14} h={13} stroke="#555"><path d="M4 1a5 5 0 00-1 9M8 1v4M5 5q4 1 7-1M7 6l-3 6M8 6l4 6M7 8l5 4M12 8l-4 4" /></Icon>辅助功能: 调查</StatusItem>
      <Views>
        <ViewButton $w={30} $active aria-label="普通视图"><Icon w={12} h={11}><path d="M.5.500h11v10H.5zM3.500.500v7.500h8M6.500 3.500h3v2h-3z" /></Icon></ViewButton>
        <ViewButton $w={37} $h={20} aria-label="幻灯片浏览"><Icon w={12} h={11}><path d="M.5.500h4v4h-4zM7.500.500h4v4h-4zM.5 6.500h4v4h-4zM7.500 6.500h4v4h-4z" /></Icon></ViewButton>
        <ViewButton $w={38} aria-label="阅读视图"><Icon w={12} h={11}><path d="M.5.500h5v10h-5zM6.500.500h5v10h-5zM1 3.500h10M1 5.500h10M1 7.500h10" /></Icon></ViewButton>
        <ViewButton $w={36} aria-label="幻灯片放映"><Icon w={12} h={12}><path d="M0 .5h12M1.500.500v6h9v-6M6 6.500v4M3 11.500l3-2 3 2M4 3.500h4" /></Icon></ViewButton>
        <Slot $w={16} aria-label="缩小"><Icon w={8}><path d="M0 4h8" /></Icon></Slot>
        <Zoom type="range" min="0" max="100" defaultValue="29" aria-label="显示比例" />
        <Slot $w={8} aria-label="放大"><Icon w={8}><path d="M0 4h8M4 0v8" /></Icon></Slot>
        <Percent>62%</Percent>
        <Slot $w={11} aria-label="适应窗口"><Icon w={10} h={11}><path d="M.5.500h9v10h-9zM5 1v3M5 7v3M1 5.500h2.500M6.500 5.500H9" /></Icon></Slot>
      </Views>
      <Ime>
        <Icon w={30} h={28} stroke="none">
          <path d="M1 5l23-5q2 0 2.500 2l3 19q0 2-2 2.500L8 28q-2 0-2.500-2L0 8q0-2 1-3z" fill="#f0561f" />
          <path d="M22 6.500Q14 4 9.500 7.500C5 12 11 14 15 14c8 0 8 4 4 6q-5 2-11-1" fill="none" stroke="#fff" strokeWidth="3.800" />
        </Icon>
        <Slot $w={21} $h={21}><Letter $size={18} $weight={400}>A</Letter></Slot>
        <Slot $w={23} aria-label="标点"><Icon w={12} h={12} fill="currentColor" stroke="none"><circle cx="3" cy="3" r="1.800" /><path d="M8 6h3v2q0 3-3 3.500 1-1 1-2H8z" /></Icon></Slot>
        <Slot $w={23} aria-label="语音"><Mic w={12} /></Slot>
        <Slot $w={22} aria-label="键盘"><Icon w={14} h={11}><rect x=".7" y=".7" width="12.600" height="9.600" rx="1" strokeWidth="1.400" /><path d="M3 3.500h8M3 5.500h8" strokeDasharray="1.500 .8" strokeWidth="1.300" /><path d="M4 8h6" /></Icon></Slot>
        <Slot $w={22} aria-label="皮肤"><Icon w={14} h={13} fill="currentColor" stroke="none"><path d="M4 0q3 2 6 0l4 3-2 3.500-1-.5v7H3V6l-1 .5L0 3z" /></Icon></Slot>
        <Slot $w={23} aria-label="游戏"><Icon w={14} h={13} stroke="none"><path d="M6.500 0h1v3h-1zM7 2c5 0 7 2 7 5s-2 6-7 6-7-3-7-6 2-5 7-5z" fill="currentColor" /><path d="M2.500 7.500h4M4.500 5.500v4" stroke="#fff" /><circle cx="10" cy="7.500" r="1.500" stroke="#fff" /></Icon></Slot>
        <Slot $w={22} aria-label="工具"><Icon w={12} h={12} fill="currentColor" stroke="none"><rect width="5.500" height="5.500" rx="1" /><rect x="6.500" width="5.500" height="5.500" rx="2" /><rect y="6.500" width="5.500" height="5.500" rx="1" /><rect x="6.500" y="6.500" width="5.500" height="5.500" rx="1" /></Icon></Slot>
        <Slot $w={22} aria-label="设置"><Icon w={12} h={13}><circle cx="6" cy="6.500" r="3.800" strokeWidth="2.600" /><path d="M6 0v2M6 11v2M0 3.500l2 1M12 3.500l-2 1M0 9.500l2-1M12 9.500l-2-1" strokeWidth="1.800" /><path d="M6 5v5" strokeWidth="1.500" /></Icon></Slot>
      </Ime>
    </StatusBar>
  );
}

function TaskbarRow() {
  return (
    <Taskbar>
      <Slot $w={34} aria-label="开始"><Icon w={15} fill="#111" stroke="none"><path d="M0 2l6.500-1v6H0zM7.500 1L15 0v7H7.500zM0 8h6.500v6L0 13zM7.500 8H15v7l-7.500-1z" /></Icon></Slot>
      <Slot $w={38} aria-label="搜狗">
        <Icon w={14} strokeWidth="2.600" stroke="#111"><path d="M6.500 6.500C5 1 1 2 1.500 5M7.500 6C12 4 11 0 7 1.500M8 7.500C9 13 13 12 12.500 8.500M6.500 8C2 9 3 13.500 7 12.500M1 9q3 2 5-1M13 5q-3-2-5 1" /></Icon>
      </Slot>
      <Apps>
        {apps.map(a => (
          <TaskButton key={a.name} $open={a.open} $active={a.active} aria-label={a.name}>
            {a.icon}
            {a.cursor && <Cursor><Icon w={12} h={18} stroke="#222"><path d="M.5.800v14l3.300-3 2.400 5.500 2.600-1.200-2.400-5.300H11z" fill="#fff" /></Icon></Cursor>}
          </TaskButton>
        ))}
      </Apps>
      <Tray>
        <Slot $w={22} aria-label="显示隐藏的图标"><Icon w={11} h={6} stroke="#222"><path d="M.5 5.500l5-5 5 5" /></Icon></Slot>
        <Slot $w={22} aria-label="麦克风"><Icon w={8} h={15} fill="#111" stroke="none"><rect x="0" width="8" height="11" rx="1" /><path d="M3 11h2v2h2v2H1v-2h2z" /></Icon></Slot>
        <Slot $w={23} aria-label="安全"><Icon w={15} stroke="none"><circle cx="7.500" cy="7.500" r="7.500" fill="#f5d91f" /><path d="M1 10A7 7 0 015 1M14 5a7 7 0 01-5 9" stroke="#18a050" strokeWidth="2" /><path d="M4 7.500h7M7.500 4v7" stroke="#128040" strokeWidth="1.800" /></Icon></Slot>
        <Slot $w={23} aria-label="电池"><Icon w={15} h={11} fill="#111"><path d="M3.500 3.500h11v7h-11z" /><path d="M0 3h4v2q-2 2-4 0zM1 1v2M3 1v2" fill="#ededee" /></Icon></Slot>
        <Slot $w={22} aria-label="网络"><Icon w={12} h={12} stroke="#555"><path d="M.5 11.500Q1 1 11.500.500M3.500 11.500Q4 4.500 11.500 3.500M6.500 11.500Q7 7.500 11.500 6.500" /><circle cx="10.500" cy="10.500" r="1" fill="#333" /></Icon></Slot>
        <Slot $w={18} aria-label="输入法"><Icon w={13} h={14} stroke="#555"><path d="M.5 13.500L6 .5h1l5.500 13h-2l-1.300-3.500H3.800L2.500 13.500zM6.500 4L4.500 8.500h4z" /></Icon></Slot>
        <time>14:56</time>
        <Slot $w={17} aria-label="通知"><Icon w={15} h={15} fill="#111" stroke="none"><path d="M0 0h15v11H7v3l-3-3H0z" /><path d="M3 3.500h9M3 5.500h9M3 7.500h6" stroke="#eee" /><circle cx="12" cy="12" r="3" fill="#555" stroke="#eee" /></Icon></Slot>
      </Tray>
    </Taskbar>
  );
}

export default function App() {
  return (
    <>
      <GlobalStyle />
      <Shell>
        <MeetingBar>
          <h1>腾讯会议网络研讨会</h1>
          <MeetingControls>
            <Slot $w={14} aria-label="最小化"><Icon w={14} strokeWidth="2"><path d="M0 7h14" /></Icon></Slot>
            <Slot $w={13} aria-label="最大化"><Icon w={13} strokeWidth="2"><path d="M1 1h11v11H1z" /></Icon></Slot>
            <Slot $w={13} aria-label="关闭"><Cross w={12} strokeWidth="2" /></Slot>
          </MeetingControls>
        </MeetingBar>
        <Gap />
        <TitleBar>
          <QuickAccess>
            <Slot $w={14} aria-label="保存"><Icon w={12} h={12}><path d="M.7.700h10.600v10.600H.7z" strokeWidth="1.400" /><path d="M2 7h8v4H8V9H5v2H2z" fill="#fff" stroke="none" /></Icon></Slot>
            <Slot $w={40} aria-label="撤消"><Icon w={22} h={12} stroke="#d58b77"><path d="M5 .5L1 4.500l4 4M1 4.500h8q4 0 4 3.500t-5 3.500" strokeWidth="1.600" /><path d="M17.500 4l2 2 2-2" /></Icon></Slot>
            <Slot $w={32} aria-label="重复"><Icon w={12} h={13} strokeWidth="2"><path d="M4 2.500A5 5 0 108.500 2.500" /><path d="M4.500 0v5.500M0 1.500h5" strokeWidth="1.500" /></Icon></Slot>
            <Slot $w={24} aria-label="放映"><Icon w={15} h={13}><path d="M0 .5h14M1.500.500v7h5M3 3.500h3M3 5.500h2M7 2.500h5v4H7zM5 12.500l3-3 3 3" /><circle cx="10" cy="7" r="2.500" /></Icon></Slot>
            <Slot $w={28} aria-label="工具箱"><Icon w={15} h={13} fill="#fff" stroke="none"><path d="M4 2V0h6v2h4v4H0V2h4zm1-1v1h4V1zM0 7h6v1h2v4H0zM9 7l1.500 2L12 7l1 2 1-1v5h-4z" /></Icon></Slot>
            <Slot $w={26} aria-label="形状文本"><Icon w={16} h={14}><path d="M.5 7V.5h9v3M9.500 5a4 4 0 110 8" /><text x="1" y="14" fontSize="11" fontWeight="700" fill="#fff" stroke="none">A</text></Icon></Slot>
            <Slot $w={32} aria-label="自定义快速访问工具栏"><Icon w={6} h={7} fill="#fff" stroke="none"><path d="M0 1h6v1H0zM0 3.500h6L3 6.500z" /></Icon></Slot>
          </QuickAccess>
          <span>单片机原理、接口技术及应用实战-9-指令系统-3.pptx  -  PowerPoint</span>
          <WindowControls>
            <SignIn>登录</SignIn>
            <Slot $w={44} aria-label="功能区显示选项"><Icon w={13} h={10}><path d="M.5.500h12v9H.5zM.5 2h12M6.500 8V4M4.500 6l2-2 2 2" /></Icon></Slot>
            <Slot $w={43} aria-label="最小化"><Icon w={10}><path d="M0 4.500h10" /></Icon></Slot>
            <Slot $w={43} aria-label="还原"><Icon w={10}><rect x=".5" y="2.500" width="7" height="7" rx="1" /><path d="M2.500 2.500q0-2 2-2H7q2.500 0 2.500 2.500v3q0 1.500-2 1.500" /></Icon></Slot>
            <Slot $w={44} aria-label="关闭"><Cross w={9} /></Slot>
          </WindowControls>
        </TitleBar>
        <Tabs>
          <Tab $file>文件</Tab>
          <Tab $active>开始</Tab>
          {tabs.map(t => <Tab key={t}>{t}</Tab>)}
          <TellMe><Bulb />操作说明搜索</TellMe>
          <Slot $w={43} $h={28} aria-label="批注"><Icon w={14} h={12}><path d="M.5.500h13v8H5L2.500 11V8.500h-2z" /></Icon></Slot>
        </Tabs>
        <PowerPointRibbon />
        <DocTabs>
          <DocTab>
            <Icon w={11} h={11} stroke="none"><path d="M5 1h5v9H5z" fill="#fff" stroke="#d06a50" /><rect y="2" width="7" height="7" fill="#cf3d1d" /><path d="M2.500 7.500V4h2v2h-2" stroke="#fff" /></Icon>
            单片机原理、接口技术及应用实战-9-指令系统-3.pptx
            <button aria-label="关闭文档"><Cross w={6} stroke="#b08a7a" /></button>
          </DocTab>
          <NewTab aria-label="新建文档" />
          <DocButton aria-label="文档列表"><Down /></DocButton>
          <DocButton aria-label="关闭"><Cross w={6} strokeWidth="1.600" stroke="#222" /></DocButton>
        </DocTabs>
        <Workspace>
          <Outline>
            {[4, 5, 6, 7, 8, 9].map(n => (
              <OutlineItem key={n} $active={n === 7}>
                <div>{n}{n > 4 && <Star />}</div>
                <Mini n={n} active={n === 7} />
              </OutlineItem>
            ))}
          </Outline>
          <Scrollbar>
            <ScrollButton aria-label="向上"><Up /></ScrollButton>
            <ScrollThumb $h={63} $top={34} />
            <ScrollButton aria-label="向下"><Down /></ScrollButton>
          </Scrollbar>
          <SlideCanvas />
          <Scrollbar $bottom={20}>
            <ScrollButton aria-label="上翻"><Up /></ScrollButton>
            <ScrollThumb $h={16} $top={59} />
            <ScrollButton aria-label="下翻"><Down /></ScrollButton>
            <Slot $w={15} $h={16} aria-label="上一张幻灯片"><Icon w={9} h={12} fill="#666" stroke="none"><path d="M4.500 0L9 5H7l2 3v4H0V8l2-3H0z" /></Icon></Slot>
            <Slot $w={15} $h={16} aria-label="下一张幻灯片"><Icon w={9} h={12} fill="#666" stroke="none"><path d="M0 0h9v4L7 6h2l-4.500 6L0 6h2L0 4z" /></Icon></Slot>
          </Scrollbar>
        </Workspace>
        <Status />
        <TaskbarRow />
        <ShareStrip>
          <ShareLabel>
            <Icon w={16} h={18} stroke="#fff"><rect x="4" y="0" width="8" height="13" rx="4" fill="#fff" stroke="none" /><path d="M4 6h8v3a4 4 0 01-8 0z" fill="#34d84a" stroke="none" /><path d="M1.500 8v1a6.500 6.500 0 0013 0V8M8 15v3" strokeWidth="1.600" /></Icon>
            <Icon w={16} h={14} stroke="none"><rect width="16" height="12" rx="2" fill="#fff" /><path d="M3 13h10v1H3z" fill="#fff" /><path d="M4 9q0-4 5-4V3l4 3.200L9 9.500V7.500Q6 7 4 9z" fill="#101112" /></Icon>
            陈桂友的屏幕共享
          </ShareLabel>
        </ShareStrip>
      </Shell>
    </>
  );
}
